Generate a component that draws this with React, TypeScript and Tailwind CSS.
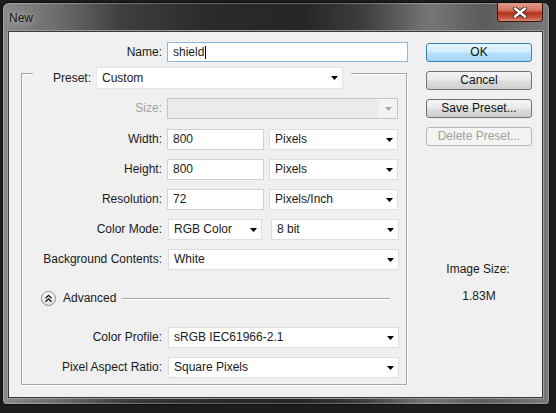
import React from "react";

function Arrow({ disabled = false }: { disabled?: boolean }) {
  return (
    <svg width="7" height="4" viewBox="0 0 7 4" className="shrink-0">
      <polygon points="0,0 7,0 3.5,4" fill={disabled ? "#a8a8a8" : "#000"} />
    </svg>
  );
}

function TextField({ value, className = "" }: { value: string; className?: string }) {
  return (
    <div className={`h-[21px] border border-[#d2d2d2] bg-white pl-[5px] flex items-center text-[#1a1a1a] ${className}`}>
      {value}
    </div>
  );
}

function Select({ value, className = "" }: { value: string; className?: string }) {
  return (
    <div className={`h-[21px] border border-[#dedede] bg-white pl-[5px] pr-[4px] flex items-center justify-between text-[#1a1a1a] ${className}`}>
      <span>{value}</span>
      <Arrow />
    </div>
  );
}

function Row({ label, children, disabled = false, className = "" }: { label: string; children: React.ReactNode; disabled?: boolean; className?: string }) {
  return (
    <div className={`flex items-center gap-[5px] h-[21px] ${className}`}>
      <div className={`w-[140px] text-right ${disabled ? "text-[#a3a3a3]" : "text-[#1a1a1a]"}`}>{label}</div>
      {children}
    </div>
  );
}

function Button({ label, primary = false, disabled = false }: { label: string; primary?: boolean; disabled?: boolean }) {
  const cls = primary
    ? "border-[#3c7fb1] bg-[linear-gradient(180deg,#e6f5fd_0%,#d3eefc_45%,#b3e0fa_55%,#a3d6f4_100%)] text-[#111]"
    : disabled
    ? "border-[#b5b5b5] bg-[#f4f4f4] text-[#a0a0a0]"
    : "border-[#707070] bg-[linear-gradient(180deg,#f4f4f4_0%,#ebebeb_45%,#dddddd_55%,#cfcfcf_100%)] text-[#111]";
  return (
    <div className={`h-[19px] w-[106px] rounded-[3px] border flex items-center justify-center ${cls}`}>
      {label}
    </div>
  );
}

export default function App() {
  return (
    <div
      className="w-[556px] h-[413px] bg-[#1c1c1c] pt-[2px] pl-[2px] text-[12px] leading-[15px]"
      style={{ fontFamily: '"Liberation Sans", Arial, sans-serif' }}
    >
      <div className="w-[548px] h-[403px] rounded-t-[7px] rounded-b-[4px] border border-[#0c0c0c] shadow-[inset_0_0_0_1px_rgba(255,255,255,0.28)] bg-[linear-gradient(90deg,#8a8a8a_0%,#6c6c6c_10%,#3e3e3e_22%,#2a2a2a_38%,#262626_55%,#3e3e3e_66%,#767676_78%,#5c5c5c_88%,#7a7a7a_100%)] pl-[5px] pr-[6px] pb-[6px] flex flex-col">
        {/* title bar */}
        <div className="h-[28px] flex justify-between items-start shrink-0">
          <div className="pt-[8px] pl-[1px] text-[#151515] [text-shadow:0_0_6px_rgba(255,255,255,0.7)]">New</div>
          <div className="w-[46px] h-[19px] rounded-b-[4px] border border-[#3a1710] border-t-0 bg-[linear-gradient(180deg,#e39a8a_0%,#d27563_40%,#b8321c_55%,#c4503a_80%,#d98a76_100%)] flex items-center justify-center">
            <svg width="14" height="11" viewBox="0 0 14 11">
              <path d="M2 1.5 L12 9.5 M12 1.5 L2 9.5" stroke="#3a2a26" strokeWidth="4.2" strokeLinecap="round" />
              <path d="M2 1.5 L12 9.5 M12 1.5 L2 9.5" stroke="#ffffff" strokeWidth="2.4" strokeLinecap="round" />
            </svg>
          </div>
        </div>
        {/* client */}
        <div className="flex-1 bg-[#f0f0f0] border border-[#3a3a3a] shadow-[0_0_0_1px_#9a9a9a] flex">
          {/* left column */}
          <div className="w-[399px] pt-[10px] flex flex-col">
            <div className="flex items-center gap-[5px] h-[20px]">
              <div className="w-[153px] text-right text-[#1a1a1a]">Name:</div>
              <div className="w-[241px] h-[20px] border border-[#8cb8e4] bg-white pl-[5px] flex items-center text-[#1a1a1a]">
                shield
                <span className="inline-block w-px h-[13px] bg-black ml-[1px]" />
              </div>
            </div>
            {/* group box */}
            <div className="ml-[12px] mt-[11px] w-[386px] border border-[#a5a5a5] shadow-[1px_1px_0_#fff,inset_1px_1px_0_#fff] pb-[6px] flex flex-col">
              <div className="mt-[-7px] ml-[11px] self-start bg-[#f0f0f0] pr-[8px] flex items-center gap-[5px] h-[22px]">
                <div className="w-[58px] text-right text-[#1a1a1a]">Preset:</div>
                <Select value="Custom" className="w-[247px] h-[22px] border-[#e6e6e6]" />
              </div>
              <div className="mt-[9px] flex flex-col gap-[9px]">
                <Row label="Size:" disabled className="mb-[1px]">
                  <div className="w-[231px] h-[21px] border border-[#c5c5c5] bg-[#ebebeb] flex justify-end">
                    <div className="w-[18px] h-full bg-[#f3f3f3] flex items-center justify-center">
                      <Arrow disabled />
                    </div>
                  </div>
                </Row>
                <Row label="Width:">
                  <TextField value="800" className="w-[97px]" />
                  <Select value="Pixels" className="w-[129px]" />
                </Row>
                <Row label="Height:">
                  <TextField value="800" className="w-[97px]" />
                  <Select value="Pixels" className="w-[129px]" />
                </Row>
                <Row label="Resolution:">
                  <TextField value="72" className="w-[97px]" />
                  <Select value="Pixels/Inch" className="w-[129px]" />
                </Row>
                <Row label="Color Mode:">
                  <Select value="RGB Color" className="w-[94px] ml-[1px]" />
                  <Select value="8 bit" className="w-[128px] ml-[4px]" />
                </Row>
                <Row label="Background Contents:">
                  <Select value="White" className="w-[231px] ml-[1px]" />
                </Row>
              </div>
              <div className="mt-[21px] h-[15px] flex items-center">
                <div className="ml-[19px] w-[15px] h-[15px] rounded-full border border-[#8a8a8a] bg-[linear-gradient(180deg,#ffffff,#e2e2e2)] flex items-center justify-center">
                  <svg width="9" height="9" viewBox="0 0 9 9">
                    <path d="M1.5 4.2 L4.5 1.3 L7.5 4.2 M1.5 7.7 L4.5 4.8 L7.5 7.7" stroke="#111" strokeWidth="1.3" fill="none" />
                  </svg>
                </div>
                <div className="ml-[7px] text-[#1a1a1a]">Advanced</div>
                <div className="ml-[5px] mr-[16px] flex-1 h-px bg-[#a8a8a8] shadow-[0_1px_0_#fff]" />
              </div>
              <div className="mt-[21px] flex flex-col gap-[9px]">
                <Row label="Color Profile:">
                  <Select value="sRGB IEC61966-2.1" className="w-[231px] ml-[1px]" />
                </Row>
                <Row label="Pixel Aspect Ratio:">
                  <Select value="Square Pixels" className="w-[231px] ml-[1px]" />
                </Row>
              </div>
            </div>
          </div>
          {/* right column */}
          <div className="ml-[18px] w-[106px] pt-[11px] flex flex-col">
            <div className="flex flex-col gap-[9px]">
              <Button label="OK" primary />
              <Button label="Cancel" />
              <Button label="Save Preset..." />
              <Button label="Delete Preset..." disabled />
            </div>
            <div className="mt-[116px] text-center text-[#1a1a1a] pr-[2px]">Image Size:</div>
            <div className="mt-[12px] text-center text-[#1a1a1a]">1.83M</div>
          </div>
        </div>
      </div>
    </div>
  );
}
